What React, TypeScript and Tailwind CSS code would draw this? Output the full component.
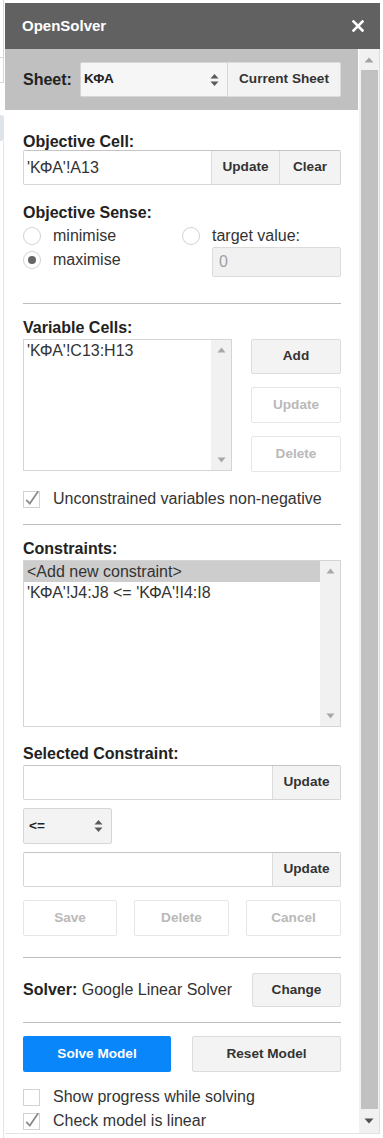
import React from 'react'

const font = "font-['Liberation_Sans',Arial,sans-serif]"

function Button({
  children,
  disabled,
  className = '',
}: {
  children: React.ReactNode
  disabled?: boolean
  className?: string
}) {
  return (
    <div
      className={`flex items-center justify-center rounded-[2px] border text-[13.6px] font-bold ${
        disabled
          ? 'border-[#e6e6e6] bg-white text-[#b9b9b9]'
          : 'border-[#dcdcdc] bg-[#f3f3f3] text-[#333]'
      } ${className}`}
    >
      {children}
    </div>
  )
}

function Label({ children, className = '' }: { children: React.ReactNode; className?: string }) {
  return <div className={`text-[16px] font-bold leading-[16px] text-[#222] ${className}`}>{children}</div>
}

function Divider({ className = '' }: { className?: string }) {
  return <div className={`h-px bg-[#bdbdbd] ${className}`} />
}

function SelectArrows() {
  return (
    <svg width="9" height="14" viewBox="0 0 9 14" className="shrink-0">
      <path d="M4.5 1 L8.5 5.5 L0.5 5.5 Z" fill="#5a5a5a" />
      <path d="M4.5 13 L8.5 8.5 L0.5 8.5 Z" fill="#5a5a5a" />
    </svg>
  )
}

function Radio({ checked }: { checked?: boolean }) {
  return (
    <div className="flex h-[18px] w-[18px] shrink-0 items-center justify-center rounded-full border border-[#d2d2d2] bg-white">
      {checked && <div className="h-[8px] w-[8px] rounded-full bg-[#666]" />}
    </div>
  )
}

function Checkbox({ checked }: { checked?: boolean }) {
  return (
    <svg width="18" height="18" viewBox="0 0 18 18" className="shrink-0 overflow-visible">
      <rect x="0.5" y="1.5" width="16" height="16" fill="white" stroke="#d2d2d2" />
      {checked && (
        <path d="M3.2 9.8 L6.8 13.6 L15.2 1.2" fill="none" stroke="#8a8a8a" strokeWidth="1.7" />
      )}
    </svg>
  )
}

function ListScroll() {
  return (
    <div className="flex w-[20px] shrink-0 flex-col items-center justify-between bg-[#f1f1f1] py-[7px]">
      <svg width="9" height="6" viewBox="0 0 9 6">
        <path d="M4.5 0.5 L8.5 5.5 L0.5 5.5 Z" fill="#a8a8a8" />
      </svg>
      <svg width="9" height="6" viewBox="0 0 9 6">
        <path d="M4.5 5.5 L8.5 0.5 L0.5 0.5 Z" fill="#a8a8a8" />
      </svg>
    </div>
  )
}

function InputWithButton({ value = '', button }: { value?: string; button: string }) {
  return (
    <div className="flex h-[35px] rounded-[2px] border border-[#d6d6d6] border-t-[#c4c4c4]">
      <div className="flex flex-1 items-center bg-white pl-[3px] text-[16px] text-[#333]">{value}</div>
      <div className="flex w-[68px] items-center justify-center border-l border-[#dcdcdc] bg-[#f3f3f3] text-[13.6px] font-bold text-[#333]">
        {button}
      </div>
    </div>
  )
}

export default function App() {
  return (
    <div className={`flex h-[1138px] w-[383px] overflow-hidden bg-white ${font}`}>
      {/* spreadsheet behind the dialog */}
      <div className="flex w-[5px] shrink-0 flex-col">
        <div className="h-[57px] w-[4px] border-r border-[#d8d8d8]" />
        <div className="h-[26px] w-[4px] border-y border-r border-[#d8d8d8]" />
        <div className="mt-[32px] h-[26px] w-[4px] rounded-r-[3px] bg-[#dfe3ea]" />
        <div className="flex-1 w-[4px] border-r border-[#e3e3e3]" />
      </div>

      <div className="mt-[3px] flex h-[1131px] w-[375px] shrink-0 flex-col border-b border-[#e3e3e3]">
        {/* title bar */}
        <div className="flex h-[46px] shrink-0 items-center justify-between bg-[#616161] pl-[17px] pr-[16px]">
          <span className="text-[15px] font-bold text-white">OpenSolver</span>
          <svg width="12" height="12" viewBox="0 0 12 12">
            <path d="M1.5 1.5 L10.5 10.5 M10.5 1.5 L1.5 10.5" stroke="white" strokeWidth="2.6" strokeLinecap="square" />
          </svg>
        </div>

        <div className="flex min-h-0 flex-1">
          {/* content */}
          <div className="flex w-[354px] shrink-0 flex-col">
            <div className="flex h-[61px] w-[353px] items-start bg-[#c0c0c0] pl-[18px] pt-[13px]">
              <span className="w-[57px] text-[16px] font-bold leading-[35px] text-[#222]">Sheet:</span>
              <div className="flex h-[35px] w-[148px] items-center justify-between rounded-l-[2px] border border-[#d6d6d6] bg-[#f6f6f6] pl-[3px] pr-[8px] text-[13.6px] font-bold text-[#222]">
                <span>ΚΦΑ</span>
                <SelectArrows />
              </div>
              <Button className="h-[35px] w-[113px] rounded-l-none border-l-0">Current Sheet</Button>
            </div>

            <div className="flex flex-col px-[18px]">
              <Label className="mt-[24px]">Objective Cell:</Label>
              <div className="flex h-[35px] rounded-[2px] border border-[#d6d6d6] border-t-[#c4c4c4]">
                <div className="flex flex-1 items-center bg-white pl-[3px] text-[16px] text-[#333]">'ΚΦΑ'!A13</div>
                <div className="flex w-[68px] items-center justify-center border-l border-[#dcdcdc] bg-[#f3f3f3] text-[13.6px] font-bold text-[#333]">
                  Update
                </div>
                <div className="flex w-[61px] items-center justify-center border-l border-[#dcdcdc] bg-[#f3f3f3] text-[13.6px] font-bold text-[#333]">
                  Clear
                </div>
              </div>

              <Label className="mt-[20px]">Objective Sense:</Label>
              <div className="mt-[5px] flex">
                <div className="flex w-[159px] flex-col gap-[4px]">
                  <div className="flex h-[20px] items-center gap-[12px] text-[16px] text-[#333]">
                    <Radio />
                    <span>minimise</span>
                  </div>
                  <div className="flex h-[20px] items-center gap-[12px] text-[16px] text-[#333]">
                    <Radio checked />
                    <span>maximise</span>
                  </div>
                </div>
                <div className="flex flex-1 flex-col">
                  <div className="flex h-[20px] items-center gap-[12px] text-[16px] text-[#333]">
                    <Radio />
                    <span>target value:</span>
                  </div>
                  <div className="ml-[30px] mt-px flex h-[30px] items-center rounded-[2px] border border-[#dcdcdc] bg-[#f1f1f1] pl-[6px] text-[16px] text-[#a0a0a0]">
                    0
                  </div>
                </div>
              </div>

              <Divider className="mt-[26px]" />

              <Label className="mt-[16px]">Variable Cells:</Label>
              <div className="mt-[3px] flex">
                <div className="flex h-[132px] w-[209px] border border-[#d4d4d4] bg-white">
                  <div className="flex-1 pl-[3px] text-[16px] leading-[21px] text-[#333]">'ΚΦΑ'!C13:H13</div>
                  <ListScroll />
                </div>
                <div className="ml-auto flex w-[90px] flex-col gap-[13px]">
                  <Button className="h-[35px]">Add</Button>
                  <Button disabled className="h-[36px]">Update</Button>
                  <Button disabled className="h-[36px]">Delete</Button>
                </div>
              </div>

              <div className="mt-[17px] flex h-[20px] items-center gap-[12px] text-[16px] text-[#333]">
                <Checkbox checked />
                <span>Unconstrained variables non-negative</span>
              </div>

              <Divider className="mt-[15px]" />

              <Label className="mt-[16px]">Constraints:</Label>
              <div className="mt-[3px] flex h-[167px] border border-[#d4d4d4] bg-white">
                <div className="flex flex-1 flex-col text-[16px] leading-[21px] text-[#333]">
                  <div className="bg-[#cdcdcd] pl-[3px]">&lt;Add new constraint&gt;</div>
                  <div className="pl-[3px]">'ΚΦΑ'!J4:J8 &lt;= 'ΚΦΑ'!I4:I8</div>
                </div>
                <ListScroll />
              </div>

              <Label className="mt-[19px]">Selected Constraint:</Label>
              <div className="mt-[3px]">
                <InputWithButton button="Update" />
              </div>
              <div className="mt-[8px] flex h-[36px] w-[89px] items-center justify-between rounded-[2px] border border-[#d6d6d6] bg-[#f3f3f3] pl-[5px] pr-[8px] text-[13.6px] font-bold text-[#222]">
                <span>&lt;=</span>
                <SelectArrows />
              </div>
              <div className="mt-[8px]">
                <InputWithButton button="Update" />
              </div>

              <div className="mt-[13px] flex justify-between">
                <Button disabled className="h-[36px] w-[94px]">Save</Button>
                <Button disabled className="h-[36px] w-[95px]">Delete</Button>
                <Button disabled className="h-[36px] w-[95px]">Cancel</Button>
              </div>

              <Divider className="mt-[21px]" />

              <div className="mt-[15px] flex items-center justify-between">
                <div className="text-[16px] text-[#333]">
                  <span className="font-bold text-[#222]">Solver:</span> Google Linear Solver
                </div>
                <Button className="h-[34px] w-[89px]">Change</Button>
              </div>

              <Divider className="mt-[15px]" />

              <div className="mt-[13px] flex justify-between">
                <div className="flex h-[36px] w-[148px] items-center justify-center rounded-[2px] bg-[#0a86fb] text-[13.6px] font-bold text-white">
                  Solve Model
                </div>
                <Button className="h-[36px] w-[149px]">Reset Model</Button>
              </div>

              <div className="mt-[15px] flex flex-col gap-[4px]">
                <div className="flex h-[20px] items-center gap-[12px] text-[16px] text-[#333]">
                  <Checkbox />
                  <span>Show progress while solving</span>
                </div>
                <div className="flex h-[20px] items-center gap-[12px] text-[16px] text-[#333]">
                  <Checkbox checked />
                  <span>Check model is linear</span>
                </div>
              </div>
            </div>
          </div>

          {/* dialog scrollbar */}
          <div className="flex w-[20px] shrink-0 flex-col items-center bg-[#f1f1f1]">
            <div className="flex h-[21px] items-center justify-center">
              <svg width="10" height="6" viewBox="0 0 10 6">
                <path d="M5 0.5 L9.5 5.5 L0.5 5.5 Z" fill="#a3a3a3" />
              </svg>
            </div>
            <div className="w-[17px] flex-1 bg-[#c1c1c1]" />
            <div className="flex h-[24px] items-center justify-center">
              <svg width="10" height="6" viewBox="0 0 10 6">
                <path d="M5 5.5 L9.5 0.5 L0.5 0.5 Z" fill="#505050" />
              </svg>
            </div>
          </div>
          <div className="w-px shrink-0 bg-[#dedede]" />
        </div>
      </div>
    </div>
  )
}
